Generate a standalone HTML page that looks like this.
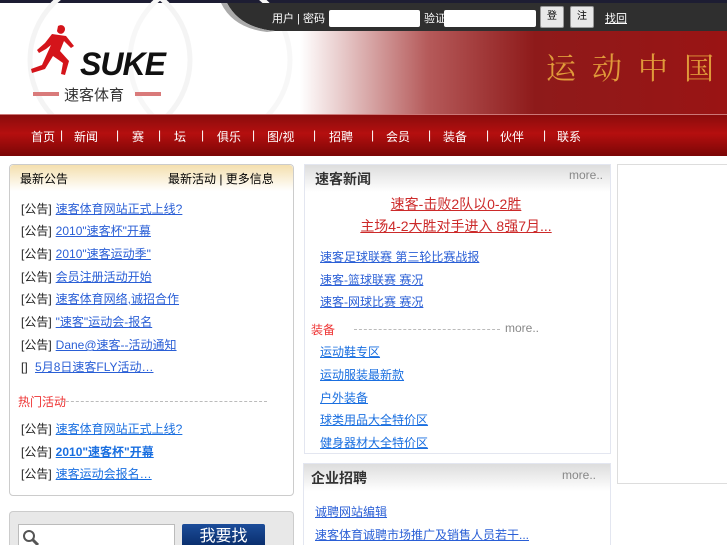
<!DOCTYPE html>
<html><head><meta charset="utf-8"><style>
*{margin:0;padding:0;box-sizing:border-box}
html,body{width:727px;height:545px;overflow:hidden}
body{background:#fff;font-family:"Liberation Sans","Noto Sans CJK SC",sans-serif;font-size:12px;position:relative}
#w{position:absolute;left:0;top:0;width:727px;height:545px;overflow:hidden}
.abs{position:absolute}
a{color:#2a5fd6;text-decoration:underline}
.top{left:0;top:0;width:727px;height:3px;background:#1d1d33}
.ban{left:300px;top:30px;width:427px;height:84px;background:linear-gradient(90deg,#fff 0%,#e7c9c9 10%,#b55a5a 30%,#8e1a1a 55%,#9a1414 100%);overflow:hidden}
.nav{left:0;top:114px;width:727px;height:42px;background:linear-gradient(#8a0c0c,#b50f0f 45%,#7a0606);border-top:1px solid #c77}
.nav span{color:#fff;font-size:12px;position:absolute;top:13px;white-space:nowrap}
.box{border:1px solid #ccc;border-radius:4px}
.row{position:absolute;left:21px;font-size:12px;color:#222}
.row a{margin-left:4px}
.mrow{position:absolute;left:320px;font-size:12px}
</style></head><body><div id="w">
<div class="abs top"></div>
<svg class="abs" style="left:0;top:0" width="300" height="115">
<circle cx="110" cy="60" r="80" fill="none" stroke="#f4f4f4" stroke-width="5"/>
<circle cx="210" cy="60" r="80" fill="none" stroke="#f7f7f7" stroke-width="5"/>
</svg>
<div class="abs ban"><div class="abs" style="left:246px;top:14px;color:#e09a3a;font-size:30px;letter-spacing:16px;white-space:nowrap;font-family:'Noto Serif CJK SC',serif">运动中国体</div></div>
<svg class="abs" style="left:215px;top:0" width="512" height="32">
<path d="M12 3 Q25 28 60 31 L512 31 L512 3 Z" fill="#2f2f2f"/>
<path d="M6 3 Q18 28 52 32 L60 31 Q25 28 12 3Z" fill="#aaa"/>
</svg>
<div class="abs" style="left:272px;top:10px;color:#fff;font-size:11px">用户 | 密码</div>
<div class="abs" style="left:329px;top:10px;width:91px;height:17px;background:#fff;border-radius:2px"></div>
<div class="abs" style="left:424px;top:10px;color:#fff;font-size:11px">验证</div>
<div class="abs" style="left:444px;top:10px;width:92px;height:17px;background:#fff;border-radius:2px"></div>
<div class="abs" style="left:540px;top:6px;width:24px;height:22px;background:#e8e8e8;border:1px solid #999;border-radius:2px;font-size:10px;text-align:center;line-height:20px">登</div>
<div class="abs" style="left:570px;top:6px;width:24px;height:22px;background:#e8e8e8;border:1px solid #999;border-radius:2px;font-size:10px;text-align:center;line-height:20px">注</div>
<div class="abs" style="left:605px;top:10px;color:#fff;font-size:11px;text-decoration:underline">找回</div>
<svg class="abs" style="left:18px;top:22px" width="70" height="62"><path d="M40 4c5-3 9 2 6 6-2 3-6 2-7-1zM34 12l14 2 8 10-3 2-7-7-4 10 9 10-4 14-4-1 2-11-10-7-8 13-13 4-1-4 11-4 9-20-5 4-7 4-2-3 8-7z" fill="#d4141a"/></svg>
<div class="abs" style="left:80px;top:46px;font-size:32px;font-weight:bold;font-style:italic;color:#111;letter-spacing:-1px">SUKE</div>
<div class="abs" style="left:33px;top:92px;width:26px;height:4px;background:#d97a7a"></div>
<div class="abs" style="left:135px;top:92px;width:26px;height:4px;background:#d97a7a"></div>
<div class="abs" style="left:64px;top:84px;font-size:15px;color:#333">速客体育</div>
<div class="abs nav">
<span style="left:31px">首页</span><span style="left:60px">|</span><span style="left:74px">新闻</span><span style="left:116px">|</span><span style="left:132px">赛</span><span style="left:158px">|</span><span style="left:174px">坛</span><span style="left:201px">|</span><span style="left:217px">俱乐</span><span style="left:252px">|</span><span style="left:267px">图/视</span><span style="left:313px">|</span><span style="left:329px">招聘</span><span style="left:371px">|</span><span style="left:386px">会员</span><span style="left:428px">|</span><span style="left:443px">装备</span><span style="left:486px">|</span><span style="left:500px">伙伴</span><span style="left:543px">|</span><span style="left:557px">联系</span>
</div>
<div class="abs box" style="left:9px;top:164px;width:285px;height:332px"></div>
<div class="abs" style="left:10px;top:165px;width:283px;height:26px;background:linear-gradient(#f4dfae,#fff);border-radius:4px 4px 0 0"></div>
<div class="abs" style="left:20px;top:170px;font-size:12px">最新公告</div>
<div class="abs" style="left:168px;top:170px;font-size:12px">最新活动 | 更多信息</div>
<div class="row" style="top:200px">[公告]<a>速客体育网站正式上线?</a></div>
<div class="row" style="top:222px">[公告]<a>2010"速客杯"开幕</a></div>
<div class="row" style="top:245px">[公告]<a>2010"速客运动季"</a></div>
<div class="row" style="top:268px">[公告]<a>会员注册活动开始</a></div>
<div class="row" style="top:290px">[公告]<a>速客体育网络,诚招合作</a></div>
<div class="row" style="top:313px">[公告]<a>"速客"运动会-报名</a></div>
<div class="row" style="top:336px">[公告]<a>Dane@速客--活动通知</a></div>
<div class="row" style="top:358px">[] <a>5月8日速客FLY活动…</a></div>
<div class="abs" style="left:18px;top:393px;color:#e33;font-size:12px">热门活动</div>
<div class="abs" style="left:61px;top:401px;width:206px;border-top:1px dashed #bbb"></div>
<div class="row" style="top:420px">[公告]<a style="color:#1a6fe0">速客体育网站正式上线?</a></div>
<div class="row" style="top:443px">[公告]<a style="color:#1a6fe0;font-weight:bold">2010"速客杯"开幕</a></div>
<div class="row" style="top:465px">[公告]<a style="color:#1a6fe0">速客运动会报名…</a></div>
<div class="abs box" style="left:9px;top:511px;width:285px;height:34px;background:#e8e8e8;border-bottom:none;border-radius:4px 4px 0 0"></div>
<div class="abs" style="left:18px;top:524px;width:157px;height:21px;background:#fff;border:1px solid #bbb;border-bottom:none"></div>
<svg class="abs" style="left:21px;top:528px" width="20" height="17"><circle cx="8" cy="8" r="5" fill="none" stroke="#555" stroke-width="2"/><path d="M12 12l5 5" stroke="#555" stroke-width="3"/></svg>
<div class="abs" style="left:182px;top:524px;width:83px;height:21px;background:linear-gradient(#1c4d9a,#0a2f6e);border-radius:2px 2px 0 0;color:#fff;font-size:16px;text-align:center;line-height:26px;overflow:hidden">我要找</div>
<div class="abs" style="left:304px;top:164px;width:307px;height:290px;border:1px solid #e3e6f0"></div>
<div class="abs" style="left:305px;top:165px;width:305px;height:27px;background:linear-gradient(#ddd,#fff)"></div>
<div class="abs" style="left:315px;top:169px;font-size:14px;font-weight:bold;color:#333">速客新闻</div>
<div class="abs" style="left:569px;top:168px;font-size:12px;color:#888">more..</div>
<div class="abs" style="left:305px;top:193px;width:302px;text-align:center;color:#cc2a2a;font-size:14px;line-height:22px;text-decoration:underline">速客-击败2队以0-2胜<br>主场4-2大胜对手进入 8强7月...</div>
<div class="mrow" style="top:248px"><a>速客足球联赛 第三轮比赛战报</a></div>
<div class="mrow" style="top:271px"><a>速客-篮球联赛 赛况</a></div>
<div class="mrow" style="top:293px"><a>速客-网球比赛 赛况</a></div>
<div class="abs" style="left:311px;top:321px;color:#e33;font-size:12px">装备</div>
<div class="abs" style="left:354px;top:329px;width:146px;border-top:1px dashed #bbb"></div>
<div class="abs" style="left:505px;top:321px;font-size:12px;color:#888">more..</div>
<div class="mrow" style="top:343px"><a style="color:#1a6fe0">运动鞋专区</a></div>
<div class="mrow" style="top:366px"><a style="color:#1a6fe0">运动服装最新款</a></div>
<div class="mrow" style="top:389px"><a style="color:#1a6fe0">户外装备</a></div>
<div class="mrow" style="top:411px"><a style="color:#1a6fe0">球类用品大全特价区</a></div>
<div class="mrow" style="top:434px"><a style="color:#1a6fe0">健身器材大全特价区</a></div>
<div class="abs" style="left:303px;top:463px;width:308px;height:82px;border:1px solid #e3e6f0;border-bottom:none"></div>
<div class="abs" style="left:304px;top:464px;width:306px;height:27px;background:linear-gradient(#ddd,#fff)"></div>
<div class="abs" style="left:311px;top:468px;font-size:14px;font-weight:bold;color:#333">企业招聘</div>
<div class="abs" style="left:562px;top:468px;font-size:12px;color:#888">more..</div>
<div class="abs" style="left:315px;top:503px"><a>诚聘网站编辑</a></div>
<div class="abs" style="left:315px;top:526px"><a>速客体育诚聘市场推广及销售人员若干...</a></div>
<div class="abs" style="left:617px;top:164px;width:110px;height:320px;border:1px solid #ddd;border-right:none"></div>
</div></body></html>
